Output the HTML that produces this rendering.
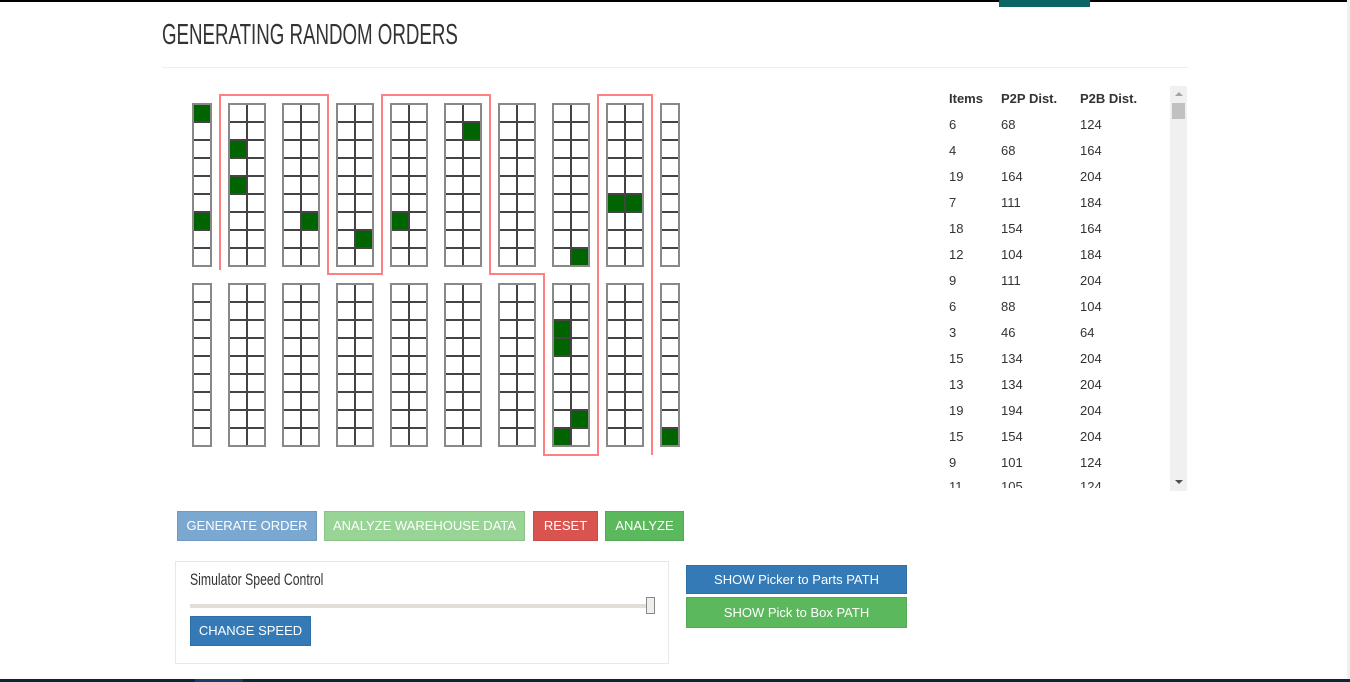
<!DOCTYPE html>
<html><head><meta charset="utf-8"><style>
body{margin:0;width:1350px;height:682px;overflow:hidden;background:#fff;font-family:"Liberation Sans",Arial,sans-serif;position:relative}
.a{position:absolute}
.btn{position:absolute;color:#fff;font-size:13px;text-align:center;box-sizing:border-box;border:1px solid rgba(0,0,0,.08)}
table{border-collapse:collapse;font-size:13px;color:#333}
td{padding:0;height:26px}
</style></head><body>
<div class="a" style="left:0;top:0;width:1350px;height:2px;background:#000"></div>
<div class="a" style="left:999px;top:0;width:91px;height:7px;background:#0e6566"></div>
<div class="a" style="left:1347px;top:0;width:3px;height:682px;background:#f0f0f0"></div>
<div class="a" style="left:0;top:679px;width:1350px;height:3px;background:#0b2539"></div>
<div class="a" style="left:195px;top:679px;width:48px;height:3px;background:#1c3d60"></div>
<div class="a" style="left:162px;top:18px;font-size:29px;color:#333;white-space:nowrap;transform:scaleX(.645);transform-origin:0 0;line-height:34px">GENERATING RANDOM ORDERS</div>
<div class="a" style="left:162px;top:67px;width:1026px;height:1px;background:#eee"></div>

<svg class="a" style="left:0;top:0" width="1350" height="682">
<defs><pattern id="g" x="13" y="14" width="18" height="18" patternUnits="userSpaceOnUse"><path d="M0 0H18M0 18H18M0 0V18M18 0V18" stroke="#444" stroke-width="2" fill="none"/></pattern></defs>
<g fill="#006400">
<rect x="193" y="104" width="18" height="18"/><rect x="193" y="212" width="18" height="18"/>
<rect x="229" y="140" width="18" height="18"/><rect x="229" y="176" width="18" height="18"/>
<rect x="301" y="212" width="18" height="18"/><rect x="355" y="230" width="18" height="18"/>
<rect x="391" y="212" width="18" height="18"/><rect x="463" y="122" width="18" height="18"/>
<rect x="571" y="248" width="18" height="18"/><rect x="607" y="194" width="36" height="18"/>
<rect x="553" y="320" width="18" height="36"/><rect x="571" y="410" width="18" height="18"/>
<rect x="553" y="428" width="18" height="18"/><rect x="661" y="428" width="18" height="18"/>
</g>
<g fill="url(#g)" stroke="#888" stroke-width="2">
<rect x="193" y="104" width="18" height="162"/><rect x="193" y="284" width="18" height="162"/>
<rect x="229" y="104" width="36" height="162"/><rect x="229" y="284" width="36" height="162"/>
<rect x="283" y="104" width="36" height="162"/><rect x="283" y="284" width="36" height="162"/>
<rect x="337" y="104" width="36" height="162"/><rect x="337" y="284" width="36" height="162"/>
<rect x="391" y="104" width="36" height="162"/><rect x="391" y="284" width="36" height="162"/>
<rect x="445" y="104" width="36" height="162"/><rect x="445" y="284" width="36" height="162"/>
<rect x="499" y="104" width="36" height="162"/><rect x="499" y="284" width="36" height="162"/>
<rect x="553" y="104" width="36" height="162"/><rect x="553" y="284" width="36" height="162"/>
<rect x="607" y="104" width="36" height="162"/><rect x="607" y="284" width="36" height="162"/>
<rect x="661" y="104" width="18" height="162"/><rect x="661" y="284" width="18" height="162"/>
</g>
<path d="M220 270V95H328V274H382V95H490V274H544V455H598V95H652V455" fill="none" stroke="#ff8080" stroke-width="2"/>
</svg>

<div class="a" style="left:949px;top:85px">
<table>
<tr style="font-weight:bold"><td style="width:52px">Items</td><td style="width:79px">P2P Dist.</td><td>P2B Dist.</td></tr>
<tr><td>6</td><td>68</td><td>124</td></tr>
<tr><td>4</td><td>68</td><td>164</td></tr>
<tr><td>19</td><td>164</td><td>204</td></tr>
<tr><td>7</td><td>111</td><td>184</td></tr>
<tr><td>18</td><td>154</td><td>164</td></tr>
<tr><td>12</td><td>104</td><td>184</td></tr>
<tr><td>9</td><td>111</td><td>204</td></tr>
<tr><td>6</td><td>88</td><td>104</td></tr>
<tr><td>3</td><td>46</td><td>64</td></tr>
<tr><td>15</td><td>134</td><td>204</td></tr>
<tr><td>13</td><td>134</td><td>204</td></tr>
<tr><td>19</td><td>194</td><td>204</td></tr>
<tr><td>15</td><td>154</td><td>204</td></tr>
<tr><td>9</td><td>101</td><td>124</td></tr>
</table>
<div style="position:absolute;left:0;top:395px;font-size:13px;color:#333;height:8px;overflow:hidden;line-height:13px;width:200px"><span style="display:inline-block;width:52px">11</span><span style="display:inline-block;width:79px">105</span>124</div>
</div>
<div class="a" style="left:930px;top:491px;width:260px;height:10px;background:#fff"></div>
<div class="a" style="left:1170px;top:86px;width:17px;height:405px;background:#f0f0f0"></div>
<div class="a" style="left:1172px;top:103px;width:13px;height:16px;background:#c1c1c1"></div>
<div class="a" style="left:1175px;top:92px;width:0;height:0;border-left:4px solid transparent;border-right:4px solid transparent;border-bottom:4px solid #a3a3a3"></div>
<div class="a" style="left:1175px;top:480px;width:0;height:0;border-left:4px solid transparent;border-right:4px solid transparent;border-top:4px solid #505050"></div>

<div class="btn" style="left:177px;top:511px;width:140px;height:30px;line-height:28px;background:#7ba8d1">GENERATE ORDER</div>
<div class="btn" style="left:324px;top:511px;width:201px;height:30px;line-height:28px;background:#97d495">ANALYZE WAREHOUSE DATA</div>
<div class="btn" style="left:533px;top:511px;width:65px;height:30px;line-height:28px;background:#d9534f">RESET</div>
<div class="btn" style="left:605px;top:511px;width:79px;height:30px;line-height:28px;background:#5cb85c">ANALYZE</div>

<div class="a" style="left:175px;top:561px;width:494px;height:103px;border:1px solid #e8e8e8;box-sizing:border-box"></div>
<div class="a" style="left:190px;top:570px;font-size:17px;color:#333;transform:scaleX(.72);transform-origin:0 0;white-space:nowrap">Simulator Speed Control</div>
<div class="a" style="left:190px;top:604px;width:460px;height:4px;background:#e2ded6"></div>
<div class="a" style="left:646px;top:597px;width:9px;height:17px;background:#eee;border:1px solid #888;box-sizing:border-box"></div>
<div class="btn" style="left:190px;top:616px;width:121px;height:30px;line-height:28px;background:#337ab7">CHANGE SPEED</div>
<div class="btn" style="left:686px;top:565px;width:221px;height:29px;line-height:27px;background:#337ab7">SHOW Picker to Parts PATH</div>
<div class="btn" style="left:686px;top:597px;width:221px;height:31px;line-height:29px;background:#5cb85c">SHOW Pick to Box PATH</div>
</body></html>
